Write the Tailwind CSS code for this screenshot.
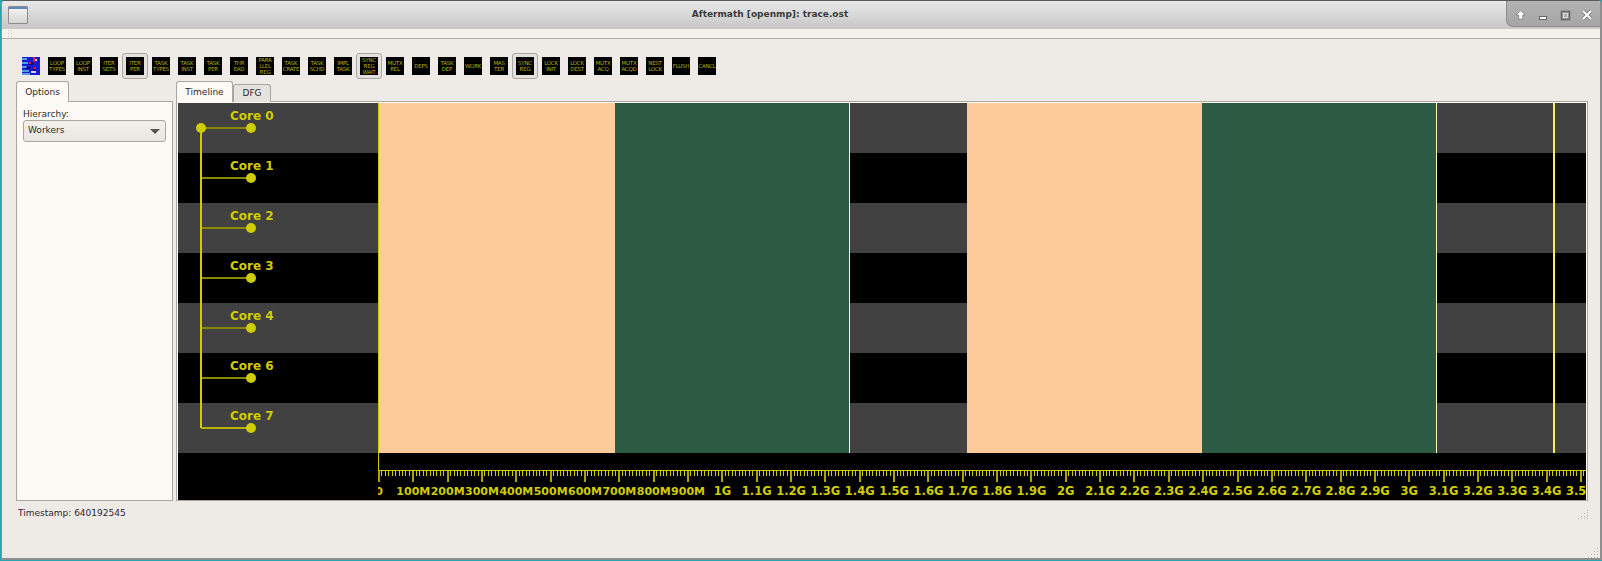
<!DOCTYPE html>
<html lang="en">
<head>
  <meta charset="UTF-8">
  <title>Aftermath [openmp]: trace.ost</title>
  <script src="https://cdn.jsdelivr.net/npm/@tailwindcss/browser@4"></script>
</head>
<body class="bg-[#2aa5ad] overflow-hidden font-['DejaVu_Sans',sans-serif]">
  <div class="w-[1602px] h-[561px] flex flex-col pl-[1px] pb-[1px] overflow-hidden">
    <div class="flex-1 flex flex-col bg-[#eeebe6] border-l border-r-2 border-b-2 border-t border-[#8f8f8f] border-t-[#5a5a5a] rounded-tl-[4px] rounded-tr-[4px] overflow-hidden">
      <!-- title bar -->
      <div class="relative h-[28px] flex-none bg-gradient-to-b from-[#e9e9e9] to-[#c6c6c6] flex items-center">
        <div class="ml-[6px] w-[20px] h-[18px] border border-[#8c8c8c] rounded-[1px] bg-gradient-to-b from-[#f6f6f6] to-[#d4d6d0]">
          <div class="h-[2px] bg-[#5f86bd]"></div>
        </div>
        <div class="absolute inset-x-0 top-[7px] pr-[62px] text-center text-[9px] leading-[12px] font-bold text-[#3a3a3a]">Aftermath [openmp]: trace.ost</div>
        <div class="absolute right-0 top-0 w-[94px] h-[26px] bg-gradient-to-b from-[#b2b2b2] to-[#a6a6a6] rounded-bl-[7px] border-l border-b border-[#8d8d8d]">
          <svg width="94" height="26" viewBox="0 0 94 26">
            <path d="M13.7 9.5 L18.2 14 H15.7 V18 H11.7 V14 H9.2 Z" fill="#fff" stroke="#6c6c6c" stroke-width="0.6"/>
            <rect x="32.5" y="15.5" width="7" height="3" fill="#fff" stroke="#666" stroke-width="1"/>
            <rect x="54.5" y="10.5" width="8" height="8" fill="none" stroke="#666" stroke-width="1.6"/>
            <rect x="56.5" y="12.5" width="4" height="4" fill="none" stroke="#d8d8d8" stroke-width="1"/>
            <path d="M76 10 L84 18 M84 10 L76 18" stroke="#777" stroke-width="3.4"/>
            <path d="M76 10 L84 18 M84 10 L76 18" stroke="#fff" stroke-width="2"/>
          </svg>
        </div>
      </div>
      <!-- toolbar grip -->
      <div class="h-[10px] flex-none bg-[#f5f2ed] border-b border-[#b0aca6] flex items-center pl-[6px]">
        <svg width="4" height="9" viewBox="0 0 4 9"><path d="M0 1h1v1H0zM3 1h1v1H3zM0 4h1v1H0zM3 4h1v1H3zM0 7h1v1H0zM3 7h1v1H3z" fill="#cfcbc4"/></svg>
      </div>
      <!-- icon toolbar -->
      <div id="tools" class="flex flex-none mt-[14px] ml-[16px] h-[26px]"></div>
      <!-- main -->
      <div class="flex mt-[2px] ml-[14px] items-start">
        <div class="w-[157px] flex-none">
          <div class="flex h-[21px]">
            <div class="relative z-10 w-[53px] h-[21px] bg-[#fdfaf6] border border-b-0 border-[#aaa6a0] rounded-t-[3px] text-[9px] text-[#2a2a2a] text-center leading-[20px]">Options</div>
          </div>
          <div class="h-[400px] -mt-[1px] bg-[#fdfaf6] border border-[#aaa6a0] px-[6px] pt-[7px]">
            <div class="text-[9px] leading-[11px] text-[#2a2a2a]">Hierarchy:</div>
            <div class="h-[22px] border border-[#aaa6a0] rounded-[3px] bg-gradient-to-b from-[#f4f1ec] to-[#e9e6e1] flex items-center justify-between pl-[4px] pr-[5px] text-[9px] text-[#2a2a2a]">
              <span>Workers</span>
              <svg width="10" height="5" viewBox="0 0 10 5"><path d="M0 0H10L5 5Z" fill="#555"/></svg>
            </div>
          </div>
        </div>
        <div class="w-[1412px] ml-[3px] flex-none">
          <div class="flex h-[21px] items-end">
            <div class="relative z-10 w-[57px] h-[21px] bg-[#fdfaf6] border border-b-0 border-[#aaa6a0] rounded-t-[3px] text-[9px] text-[#2a2a2a] text-center leading-[20px]">Timeline</div>
            <div class="w-[38px] h-[18px] bg-[#e6e3de] border border-b-0 border-[#aaa6a0] rounded-t-[3px] text-[9px] text-[#2a2a2a] text-center leading-[17px]">DFG</div>
          </div>
          <div class="h-[400px] -mt-[1px] border border-[#aaa6a0] bg-[#fdfaf6] pt-[1px] pl-[1px] pr-[1px] pb-0">
            <div id="canvas" class="relative w-[1408px] h-[397px] bg-black overflow-hidden">
              <div class="flex flex-col w-full text-[12px] leading-[14px] font-bold text-[#cfcc00]">
                <div class="h-[50px] bg-[#414141] pl-[52px] pt-[6px]">Core 0</div>
                <div class="h-[50px] bg-black pl-[52px] pt-[6px]">Core 1</div>
                <div class="h-[50px] bg-[#414141] pl-[52px] pt-[6px]">Core 2</div>
                <div class="h-[50px] bg-black pl-[52px] pt-[6px]">Core 3</div>
                <div class="h-[50px] bg-[#414141] pl-[52px] pt-[6px]">Core 4</div>
                <div class="h-[50px] bg-black pl-[52px] pt-[6px]">Core 6</div>
                <div class="h-[50px] bg-[#414141] pl-[52px] pt-[6px]">Core 7</div>
              </div>
              <!-- hierarchy tree -->
              <svg class="absolute left-0 top-0" width="200" height="350" viewBox="0 0 200 350">
                <g stroke="#8a8800" stroke-width="2">
                  <path d="M23 25H73M23 75H73M23 125H73M23 175H73M23 225H73M23 275H73"/>
                  <path d="M23 325H73" stroke="#b5b200"/>
                </g>
                <path d="M23 25V325" stroke="#cfcc00" stroke-width="2"/>
                <g fill="#cfcc00">
                  <circle cx="23" cy="25" r="5"/><circle cx="73" cy="25" r="5"/><circle cx="73" cy="75" r="5"/><circle cx="73" cy="125" r="5"/><circle cx="73" cy="175" r="5"/><circle cx="73" cy="225" r="5"/><circle cx="73" cy="275" r="5"/><circle cx="73" cy="325" r="5"/>
                </g>
              </svg>
              <!-- timeline blocks -->
              <div class="absolute left-[200px] top-0 h-[350px] w-[237px] bg-[#fdcb9a]"></div>
              <div class="absolute left-[437px] top-0 h-[350px] w-[234px] bg-[#2c5a42]"></div>
              <div class="absolute left-[671px] top-0 h-[350px] w-px bg-[#fff7c0]"></div>
              <div class="absolute left-[789px] top-0 h-[350px] w-[235px] bg-[#fdcb9a]"></div>
              <div class="absolute left-[1024px] top-0 h-[350px] w-[234px] bg-[#2c5a42]"></div>
              <div class="absolute left-[1258px] top-0 h-[350px] w-px bg-[#fff7c0]"></div>
              <div class="absolute left-[1375px] top-0 h-[350px] w-[2px] bg-[#ffe95c]"></div>
              <!-- ruler -->
              <div class="absolute left-[200px] top-0 w-px h-[367px] bg-[#cfcc00]"></div>
              <div id="ruler" class="absolute left-[200px] top-[367px] right-0 h-[30px] overflow-hidden leading-[13px] font-bold text-[#cfcc00]">
                <svg id="ticks" class="absolute left-0 top-0" width="1208" height="13"></svg>
              </div>
            </div>
          </div>
        </div>
      </div>
      <!-- status -->
      <div class="flex items-start justify-between mt-[6px] ml-[16px] mr-[4px]">
        <div class="text-[9px] leading-[12px] text-[#2a2a2a]">Timestamp: 640192545</div>
        <svg class="mt-[3px] mr-[7px]" width="11" height="9" viewBox="0 0 11 9"><path d="M9 0h1v1H9zM9 2h1v1H9zM6 3h1v1H6zM9 4h1v1H9zM3 6h1v1H3zM6 6h1v1H6zM9 6h1v1H9zM0 8h1v1H0zM3 8h1v1H3zM6 8h1v1H6zM9 8h1v1H9z" fill="#b8b4ae"/></svg>
      </div>
      <div class="flex-1 flex items-end justify-end pr-[1px]">
        <svg width="11" height="11" viewBox="0 0 11 11"><path d="M9 1h1v1H9zM6 4h1v1H6zM9 4h1v1H9zM3 7h1v1H3zM6 7h1v1H6zM9 7h1v1H9zM0 10h1v1H0zM3 10h1v1H3zM6 10h1v1H6zM9 10h1v1H9z" fill="#b8b4ae"/></svg>
      </div>
    </div>
  </div>
  <script>
    const tools = [
      ['LOGO'], ['LOOP', 'TYPES'], ['LOOP', 'INST'], ['ITER', 'SETS'], ['ITER', 'PER'], ['TASK', 'TYPES'], ['TASK', 'INST'],
      ['TASK', 'PER'], ['THR', 'EAD'], ['PARA', 'LLEL', 'REG'], ['TASK', 'CRATE'], ['TASK', 'SCHD'], ['IMPL', 'TASK'],
      ['SYNC', 'REG', 'WAIT'], ['MUTX', 'REL'], ['DEPS'], ['TASK', 'DEP'], ['WORK'], ['MAS', 'TER'], ['SYNC', 'REG'],
      ['LOCK', 'INIT'], ['LOCK', 'DEST'], ['MUTX', 'ACQ'], ['MUTX', 'ACQD'], ['NEST', 'LOCK'], ['FLUSH'], ['CANCL']
    ];
    const checked = [4, 13, 19];
    const logo = `<svg width="18" height="18" viewBox="0 0 18 18"><rect width="18" height="18" fill="#1a1ad0"/><path d="M0 1h5v2H0zM0 5h6v2H0zM0 9h5v2H0zM0 13h7v2H0zM0 16h8v2H0z" fill="#4f9fdc"/><path d="M7 5h4v3H7zM4 10h4v2H4zM11 12h3v2h-3z" fill="#0a0a70"/><path d="M11 0h2v5h-2zM7 5h2v2H7zM12 10h2v2h-2z" fill="#d8203a"/><path d="M9 14h5v2H9zM13 2h2v2h-2z" fill="#cfd8f0"/></svg>`;
    document.getElementById('tools').innerHTML = tools.map((lines, i) => {
      const box = checked.includes(i)
        ? 'border border-[#aaa6a0] rounded-[3px] bg-[#e4e1dc]'
        : 'border border-transparent';
      const face = lines[0] === 'LOGO' ? logo
        : `<div class="flex-none w-[18px] h-[18px] bg-black text-[#b5b200] text-[5.5px] leading-[6px] tracking-[-0.25px] whitespace-nowrap text-center flex flex-col justify-center overflow-hidden">${lines.map(l => `<span>${l}</span>`).join('')}</div>`;
      return `<div class="w-[26px] h-[26px] flex items-center justify-center ${box}">${face}</div>`;
    }).join('');

    // ruler: one major tick every 100M, ten minor ones between
    const step = 34.34;
    let ticks = '';
    for (let i = 0; i * step / 10 < 1210; i++) {
      const major = i % 10 === 0;
      const x = Math.round(i * step / 10) + 0.5;
      ticks += major
        ? `<path d="M${x + 0.5} 0V12" stroke="#a8a500" stroke-width="2"/>`
        : `<path d="M${x} 0V6" stroke="#cfcc00"/>`;
    }
    document.getElementById('ticks').innerHTML = ticks + `<path d="M0 .5H1208" stroke="#cfcc00"/>`;

    const ruler = document.getElementById('ruler');
    for (let n = 0; n <= 35; n++) {
      let label;
      if (n === 0) label = '0';
      else if (n < 10) label = (n * 100) + 'M';
      else label = (n % 10 === 0 ? n / 10 : (n / 10).toFixed(1)) + 'G';
      const el = document.createElement('div');
      el.className = 'absolute top-[15px] w-[60px] text-center ' + (n < 10 ? 'text-[11px]' : 'text-[11.5px]');
      el.style.left = (n * step - 29) + 'px';
      el.textContent = label;
      ruler.appendChild(el);
    }
  </script>
</body>
</html>
